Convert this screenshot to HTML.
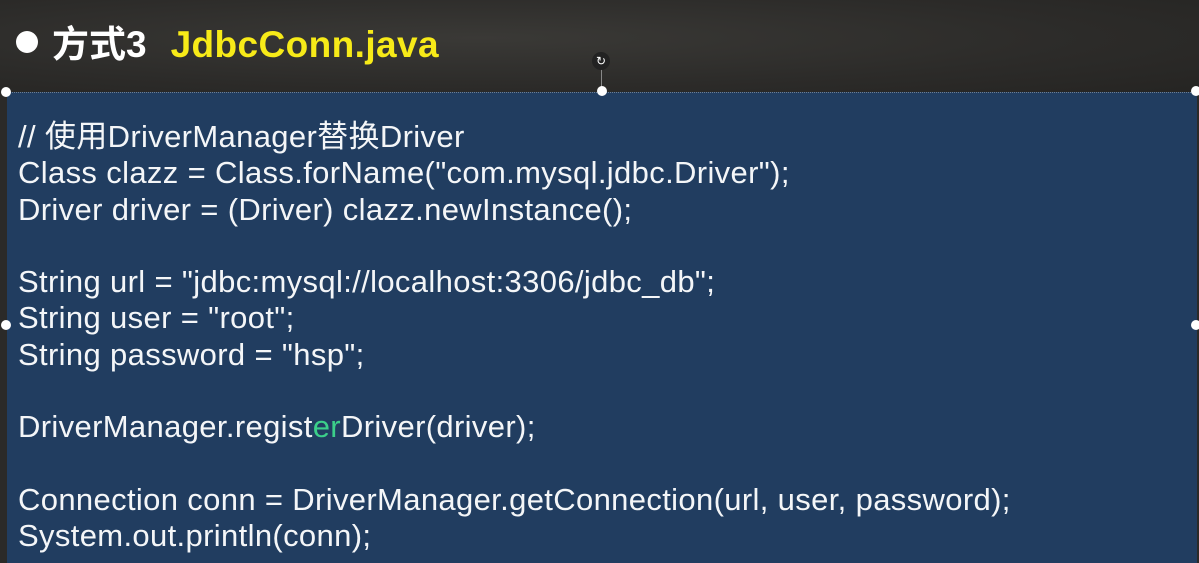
<!DOCTYPE html>
<html><head><meta charset="utf-8"><style>
html,body{margin:0;padding:0;}
body{width:1199px;height:555px;overflow:hidden;position:relative;background:#2b2a28;font-family:"Liberation Sans","Noto Sans CJK SC",sans-serif;}
.bg{position:absolute;left:0;top:0;width:1199px;height:95px;background:radial-gradient(ellipse at 40% 40%,#3a3936 0%,#2c2b29 60%,#252422 100%);}
.title{position:absolute;left:16px;top:14px;font-size:37px;font-weight:bold;color:#fff;white-space:nowrap;}
.title .dot{display:inline-block;width:22px;height:22px;border-radius:50%;background:#fff;margin-right:14px;vertical-align:4px;}
.title .y{color:#f7ea18;margin-left:24px;letter-spacing:0.4px;}
.box{position:absolute;left:7px;top:92px;width:1190px;height:470px;background:#213d60;border-top:1px dotted #6d7e92;}
.code{position:absolute;left:18px;top:119px;font-size:31px;line-height:36.3px;color:#f4f6f8;white-space:pre;letter-spacing:0.35px;}
.h{position:absolute;width:10px;height:10px;border-radius:50%;background:#fff;}
</style></head><body>
<div class="bg"></div>
<div class="title"><span class="dot"></span>方式3<span class="y">JdbcConn.java</span></div>
<div class="box"></div>
<div style="position:absolute;left:601px;top:68px;width:1px;height:22px;background:#888"></div>
<div style="position:absolute;left:592px;top:52px;width:18px;height:18px;border-radius:50%;background:#222;color:#fff;font-size:12px;text-align:center;line-height:18px;">↻</div>
<div class="h" style="left:1px;top:87px"></div>
<div class="h" style="left:597px;top:86px"></div>
<div class="h" style="left:1191px;top:86px"></div>
<div class="h" style="left:1px;top:320px"></div>
<div class="h" style="left:1191px;top:320px"></div>
<div class="code">// 使用DriverManager替换Driver
Class clazz = Class.forName("com.mysql.jdbc.Driver");
Driver driver = (Driver) clazz.newInstance();

String url = "jdbc:mysql://localhost:3306/jdbc_db";
String user = "root";
String password = "hsp";

DriverManager.regist<span style="color:#3ccf8a">er</span>Driver(driver);

Connection conn = DriverManager.getConnection(url, user, password);
System.out.println(conn);</div>
</body></html>
